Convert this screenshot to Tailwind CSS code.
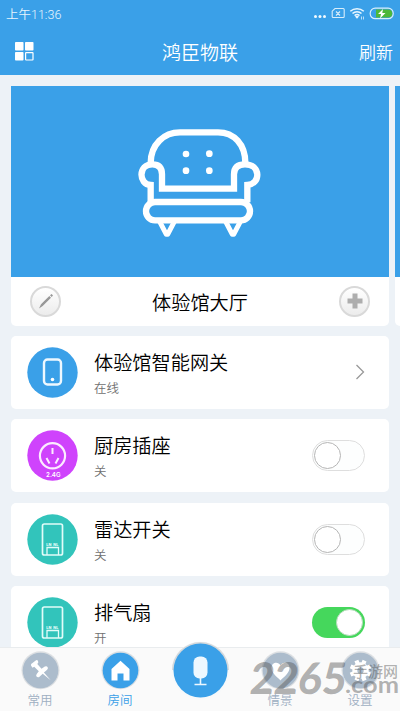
<!DOCTYPE html>
<html lang="zh-CN">
<head>
<meta charset="utf-8">
<title>鸿臣物联</title>
<script src="https://cdn.jsdelivr.net/npm/@tailwindcss/browser@4"></script>
</head>
<body class="w-[400px] h-[711px] overflow-hidden bg-[#edf2f7] font-['Noto_Sans_CJK_SC',sans-serif] font-[350] text-black">
<div class="relative flex h-[711px] w-[400px] flex-col overflow-hidden">
  <header class="h-[75px] shrink-0 bg-[#3aa0e8] text-white">
    <div class="flex h-[28px] items-center justify-between pl-[6px] pr-[6px]">
      <span class="pt-[1px] font-['Roboto','Noto_Sans_CJK_SC',sans-serif] text-[12.5px] leading-[28px] font-[350] text-[#e8f5fd]">上午11:36</span>
      <svg class="h-[16px] w-[82px]" viewBox="312 5 82 16" fill="none">
        <g fill="#f2faff"><circle cx="315.500" cy="15.500" r="1.500"/><circle cx="320" cy="15.500" r="1.500"/><circle cx="324.500" cy="15.500" r="1.500"/></g>
        <path d="M335 7.500h8.200q1 0 1 1v7q0 1-1 1h-10q-1 0-1-1v-5.300zM336 10.500l4 4M340 10.500l-4 4" stroke="#d7edfb" stroke-width="1.100"/>
        <path d="M350.300 10.300a10 10 0 0 1 13.500 0M352.500 12.500a6.500 6.500 0 0 1 9 0M354.600 14.600a3.600 3.600 0 0 1 4.900 0" stroke="#e8f6ff" stroke-width="1.500"/>
        <path d="M355 15.500l2 2.300 2-2.300q-2-1.500-4 0z" fill="#e8f6ff"/>
        <path d="M361.500 15.500v3M363.500 15.500v3" stroke="#b9def7"/>
        <rect x="370.200" y="7.200" width="23" height="10.500" rx="5" stroke="#d9effb" stroke-width="1.200"/>
        <path d="M376 8.500h12.200a4 4 0 0 1 0 8H376z" fill="#4db83a"/>
        <path d="M383 8l-5 5h3l-1 4.500 5.500-5.500h-3.200z" fill="#fff"/>
      </svg>
    </div>
    <div class="grid h-[47px] grid-cols-3 items-center pl-[15px] pr-[7px]">
      <svg class="h-[20px] w-[20px]" viewBox="0 0 20 20" fill="#fff"><rect y="0" width="8.500" height="8.500" rx=".8"/><rect x="10" y="0" width="8.500" height="8.500" rx=".8"/><rect y="10" width="8.500" height="8.500" rx=".8"/><rect x="10.600" y="10.600" width="7.400" height="7.400" rx=".5" fill="none" stroke="#fff" stroke-width="1.200"/></svg>
      <h1 class="-ml-[8px] text-center text-[19px] leading-[47px] font-[350]">鸿臣物联</h1>
      <span class="text-right text-[17px] leading-[47px]">刷新</span>
    </div>
  </header>

  <main class="flex flex-col gap-[10.400px] pl-[11px] pt-[10.500px]">
    <section class="flex h-[240px] gap-[6px] overflow-hidden">
      <article class="w-[378px] shrink-0 overflow-hidden rounded-b-[5px] bg-white">
        <div class="flex h-[191.500px] items-center justify-center bg-[#3aa0e8]">
          <svg class="h-[135px] w-[160px]" viewBox="0 0 480 405" fill="none" stroke="#fff" stroke-width="19" transform="translate(0 1)">
            <path d="M92 144C92 88 132 52 180 52H294C342 52 376 88 376 144"/>
            <path d="M92 262V210C55 208 54 148 97 148Q126 148 126 178V221H342V178Q342 148 375 148C424 148 422 208 382 210V262"/>
            <rect x="78" y="261" width="312" height="55" rx="27"/>
            <path d="M119 320L139 358H143L163 320M317 320L337 358H341L361 320" stroke-width="15" stroke-linejoin="round"/>
            <g fill="#fff" stroke="none"><circle cx="198" cy="117" r="10"/><circle cx="268" cy="116" r="10"/><circle cx="198" cy="167" r="10"/><circle cx="268" cy="167" r="10"/></g>
          </svg>
        </div>
        <div class="flex h-[48.500px] items-center justify-between px-[19px]">
          <span class="flex h-[31px] w-[31px] items-center justify-center rounded-full border-2 border-[#d9d9d9] bg-gradient-to-b from-white to-[#ececec]">
            <svg class="h-[18px] w-[18px]" viewBox="0 0 18 18" fill="#989898"><path d="M2 16.500L4 12.300 12.300 4 14 5.700 5.700 14zM13 3.300L14.600 2 16 3.400 14.700 5z"/></svg>
          </span>
          <h2 class="pt-[2px] text-[19.200px] leading-[46px] font-[350]">体验馆大厅</h2>
          <span class="flex h-[31px] w-[31px] items-center justify-center rounded-full border-2 border-[#d9d9d9] bg-gradient-to-b from-white to-[#ececec]">
            <svg class="h-[16px] w-[16px]" viewBox="0 0 16 16" fill="#adadad"><path d="M5.500.5h5v5h5v5h-5v5h-5v-5h-5v-5h5z"/></svg>
          </span>
        </div>
      </article>
      <article class="w-[378px] shrink-0 overflow-hidden rounded-b-[5px] bg-white"><div class="h-[191.500px] bg-[#3aa0e8]"></div></article>
    </section>

    <article class="flex h-[73px] w-[378px] shrink-0 items-center rounded-[5px] bg-white pl-[16px] pr-[24px]">
      <svg class="h-[51px] w-[51px]" viewBox="0 0 51 51" fill="none"><circle cx="25.500" cy="25.500" r="25.200" fill="#3aa0e8"/><rect x="17" y="12.500" width="17" height="25" rx="3.500" stroke="#eef8ff" stroke-width="2.400"/><circle cx="25.500" cy="32.500" r="1.800" fill="#fff"/></svg>
      <div class="ml-[16px] flex-1 pt-[2px]"><h3 class="text-[19.200px] leading-[28px] font-[350]">体验馆智能网关</h3><p class="mt-[1px] text-[12.500px] leading-[22px] text-[#707070]">在线</p></div>
      <svg class="h-[16px] w-[10px]" viewBox="0 0 10 16" fill="none" stroke="#999" stroke-width="1.300"><path d="M1.500 1l7 7-7 7"/></svg>
    </article>

    <article class="flex h-[73px] w-[378px] shrink-0 items-center rounded-[5px] bg-white pl-[16px] pr-[24px]">
      <svg class="h-[51px] w-[51px]" viewBox="0 0 51 51" fill="none"><circle cx="25.500" cy="25.500" r="25.200" fill="#cf43fc"/><circle cx="25.500" cy="25.800" r="12.600" stroke="#fcecff" stroke-width="2.200"/><path d="M25.500 18v6M19.500 28l3 5.500M31.500 28l-3 5.500" stroke="#fcecff" stroke-width="2"/><text x="26.300" y="46.800" text-anchor="middle" fill="#fff" font-family="Inter, sans-serif" font-size="6.200" font-weight="600" textLength="14.500" lengthAdjust="spacingAndGlyphs">2.4G</text></svg>
      <div class="ml-[16px] flex-1 pt-[2px]"><h3 class="text-[19.200px] leading-[28px] font-[350]">厨房插座</h3><p class="mt-[1px] text-[12.500px] leading-[22px] text-[#707070]">关</p></div>
      <span class="flex h-[31px] w-[53px] items-center rounded-full border border-[#dedede] bg-[#fdfefe] pl-[1px]"><i class="block h-[27px] w-[27px] rounded-full border border-[#b5b5b5] bg-white"></i></span>
    </article>

    <article class="flex h-[73px] w-[378px] shrink-0 items-center rounded-[5px] bg-white pl-[16px] pr-[24px]">
      <svg class="h-[51px] w-[51px]" viewBox="0 0 51 51" fill="none"><circle cx="25.500" cy="25.500" r="25.200" fill="#32c4bb"/><rect x="15.500" y="10" width="20" height="31" rx="1.800" stroke="#e2fcf9" stroke-width="1.700"/><path d="M20 41v-7.500h11.500V41" stroke="#e2fcf9" stroke-width="1.300"/><g fill="#e2fcf9" font-family="Inter, sans-serif" font-size="3.800" font-weight="800"><text x="19.300" y="31.800">LN</text><text x="26.300" y="31.800">NL</text></g></svg>
      <div class="ml-[16px] flex-1 pt-[2px]"><h3 class="text-[19.200px] leading-[28px] font-[350]">雷达开关</h3><p class="mt-[1px] text-[12.500px] leading-[22px] text-[#707070]">关</p></div>
      <span class="flex h-[31px] w-[53px] items-center rounded-full border border-[#dedede] bg-[#fdfefe] pl-[1px]"><i class="block h-[27px] w-[27px] rounded-full border border-[#b5b5b5] bg-white"></i></span>
    </article>

    <article class="flex h-[73px] w-[378px] shrink-0 items-center rounded-[5px] bg-white pl-[16px] pr-[24px]">
      <svg class="h-[51px] w-[51px]" viewBox="0 0 51 51" fill="none"><circle cx="25.500" cy="25.500" r="25.200" fill="#32c4bb"/><rect x="15.500" y="10" width="20" height="31" rx="1.800" stroke="#e2fcf9" stroke-width="1.700"/><path d="M20 41v-7.500h11.500V41" stroke="#e2fcf9" stroke-width="1.300"/><g fill="#e2fcf9" font-family="Inter, sans-serif" font-size="3.800" font-weight="800"><text x="19.300" y="31.800">LN</text><text x="26.300" y="31.800">NL</text></g></svg>
      <div class="ml-[16px] flex-1 pt-[2px]"><h3 class="text-[19.200px] leading-[28px] font-[350]">排气扇</h3><p class="mt-[1px] text-[12.500px] leading-[22px] text-[#707070]">开</p></div>
      <span class="flex h-[31px] w-[53px] items-center justify-end rounded-full bg-[#45d75c] pr-[2px]"><i class="block h-[27px] w-[27px] rounded-full border border-[#b7dcbc] bg-white"></i></span>
    </article>
  </main>

  <nav class="absolute inset-x-0 bottom-0 grid h-[64px] grid-cols-5 border-t border-[#e9ecee] bg-[#fafafa] text-center text-[12.500px] leading-[20px] text-[#9eafc2]">
    <a class="flex flex-col items-center pt-[3px]">
      <svg class="h-[39px] w-[39px]" viewBox="0 0 39 39"><circle cx="19.500" cy="19.200" r="19" fill="#dcdfe2"/><circle cx="19.500" cy="19.500" r="17.800" fill="#acbccc"/><path d="M10 14.500Q9.500 12.800 11.500 12l3.200-2.600Q16.300 8.600 17 10l.3 1.500-1 1.500 4.200 4.700 3.300-2.200q2-1 2.900.8.700 1.500-.8 2.600l-3 2.500 6.800 7.800-8-6.500-3.200 3q-1.700 1.200-3-.2-.9-1.300.4-2.700l1.900-2.500-4.600-4.500-1.700 1z" fill="#fff"/></svg>
      <span>常用</span>
    </a>
    <a class="flex flex-col items-center pt-[3px] text-[#3aa0e8]">
      <svg class="h-[39px] w-[39px]" viewBox="0 0 39 39"><circle cx="19.500" cy="19.200" r="19" fill="#d9dee2"/><circle cx="19.500" cy="19.500" r="17.800" fill="#3aa0e8"/><path d="M10.500 18l9-8.300 9 8.300v11.500h-6v-7h-6v7h-6z" fill="#fff"/></svg>
      <span>房间</span>
    </a>
    <a class="flex flex-col items-center">
      <svg class="-mt-[7px] h-[59px] w-[59px] shrink-0" viewBox="0 0 59 59"><circle cx="29.500" cy="29.500" r="29" fill="#f7f9fa"/><path d="M1 29A28.500 28 0 0 1 58 29" fill="#d5d9dc"/><circle cx="29.500" cy="29.500" r="27" fill="#3aa0e8"/><rect x="22.500" y="15.500" width="14" height="22" rx="6" fill="#edf8ff"/><path d="M29.500 37v6M23.500 43.500h12" stroke="#edf8ff" stroke-width="1.600"/></svg>
    </a>
    <a class="flex flex-col items-center pt-[3px]">
      <svg class="h-[39px] w-[39px]" viewBox="0 0 39 39"><circle cx="19.500" cy="19.200" r="19" fill="#dcdfe2"/><circle cx="19.500" cy="19.500" r="17.800" fill="#acbccc"/><path d="M19.500 29.500C17 26.500 10.500 22.500 10.500 17c0-5.500 6.500-7 9-2.500 2.500-4.500 9-3 9 2.500 0 5.500-6.500 9.500-9 12.500z" fill="#fff"/></svg>
      <span>情景</span>
    </a>
    <a class="flex flex-col items-center pt-[3px]">
      <svg class="h-[39px] w-[39px]" viewBox="0 0 39 39"><circle cx="19.500" cy="19.200" r="19" fill="#dcdfe2"/><circle cx="19.500" cy="19.500" r="17.800" fill="#acbccc"/><circle cx="19.500" cy="19.500" r="5.700" fill="none" stroke="#fff" stroke-width="5"/><g stroke="#fff" stroke-width="4.200" transform="rotate(22.500 19.500 19.500)"><path d="M19.500 8.800v4M19.500 26.200v4M8.800 19.500h4M26.200 19.500h4M11.900 11.900l2.900 2.900M24.200 24.200l2.900 2.900M27.100 11.900l-2.900 2.900M14.800 24.200l-2.900 2.900"/></g></svg>
      <span>设置</span>
    </a>
  </nav>

  <svg class="pointer-events-none absolute bottom-0 right-0 h-[61px] w-[155px]" viewBox="245 650 155 61" fill="#555" fill-opacity=".45" font-family="Lato, sans-serif" font-weight="900">
    <text transform="translate(249 693.500) skewX(-6)" font-size="43.500" textLength="96" lengthAdjust="spacingAndGlyphs">2265</text>
    <text x="345" y="692.500" font-size="23" font-weight="700" textLength="54" lengthAdjust="spacingAndGlyphs">.com</text>
    <text x="353" y="676.500" font-size="15" font-family="Noto Sans CJK SC, sans-serif" font-weight="500" textLength="45">手游网</text>
  </svg>
</div>
</body>
</html>
